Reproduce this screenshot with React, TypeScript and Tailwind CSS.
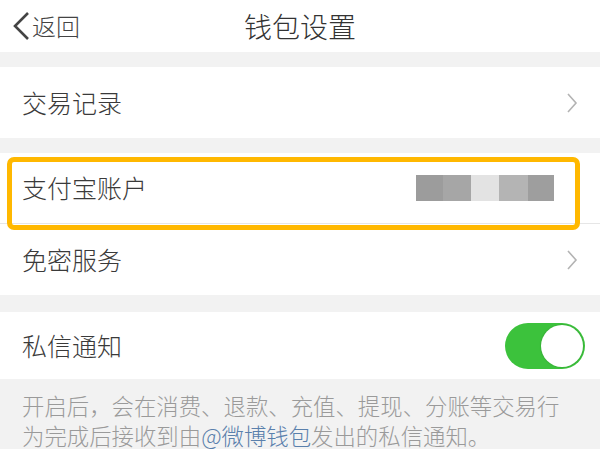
import React from 'react';

const font = { fontFamily: '"Noto Sans CJK SC", "Noto Sans", sans-serif' };

function Chevron() {
  return (
    <svg width="14" height="22" viewBox="0 0 14 22" fill="none" className="shrink-0">
      <path d="M3 2l8 9-8 9" stroke="#b3b3b3" strokeWidth="1.6" />
    </svg>
  );
}

function Gap({ h }: { h: string }) {
  return <div className={`${h} bg-[#f2f2f2]`} />;
}

export default function App() {
  return (
    <div className="w-[600px] h-[450px] overflow-hidden bg-white font-light text-[#3a3a3a]" style={font}>
      <header className="relative flex h-[52px] items-center justify-center">
        <div className="absolute left-[11px] top-[11px] flex items-center">
          <svg width="20" height="30" viewBox="0 0 20 30" fill="none">
            <path d="M17 2L4 15l13 13" stroke="#444" strokeWidth="2.6" />
          </svg>
          <span className="ml-[1px] text-[24px] leading-none text-[#444]">返回</span>
        </div>
        <h1 className="text-[28px] leading-none text-[#333]">钱包设置</h1>
      </header>
      <Gap h="h-[15px]" />
      <div className="flex h-[71px] items-center justify-between pl-[22px] pr-[21px]">
        <span className="text-[25px]">交易记录</span>
        <Chevron />
      </div>
      <Gap h="h-[15px]" />
      <div className="relative flex h-[71px] items-center justify-between border-b border-[#e6e6e6] pl-[22px] pr-[46px]">
        <span className="text-[25px]">支付宝账户</span>
        <div className="flex h-[26px]">
          <div className="w-[27px] bg-[#9c9c9c]" />
          <div className="w-[28px] bg-[#a6a6a6]" />
          <div className="w-[28px] bg-[#e3e3e3]" />
          <div className="w-[29px] bg-[#b4b4b4]" />
          <div className="w-[26px] bg-[#9e9e9e]" />
        </div>
        <div className="pointer-events-none absolute left-[7px] right-[20px] top-[4px] h-[73px] rounded-[7px] border-[5px] border-[#ffb800]" />
      </div>
      <div className="flex h-[71px] items-center justify-between pl-[22px] pr-[21px]">
        <span className="text-[25px]">免密服务</span>
        <Chevron />
      </div>
      <Gap h="h-[17px]" />
      <div className="flex h-[67px] items-center justify-between pl-[22px] pr-[15px]">
        <span className="text-[25px]">私信通知</span>
        <div className="flex h-[46px] w-[80px] items-center justify-end rounded-full bg-[#3cc23c] p-[2px]">
          <div className="h-[42px] w-[42px] rounded-full bg-white shadow-[0_0_1px_1px_rgba(0,0,0,0.08)]" />
        </div>
      </div>
      <div className="h-[70px] bg-[#f2f2f2] px-[22px] pt-[11px] text-[22.4px] leading-[30px] text-[#9a9a9a]">
        <p>开启后，会在消费、退款、充值、提现、分账等交易行</p>
        <p>
          为完成后接收到由<span className="text-[#5a80ac]">@微博钱包</span>发出的私信通知。
        </p>
      </div>
    </div>
  );
}
